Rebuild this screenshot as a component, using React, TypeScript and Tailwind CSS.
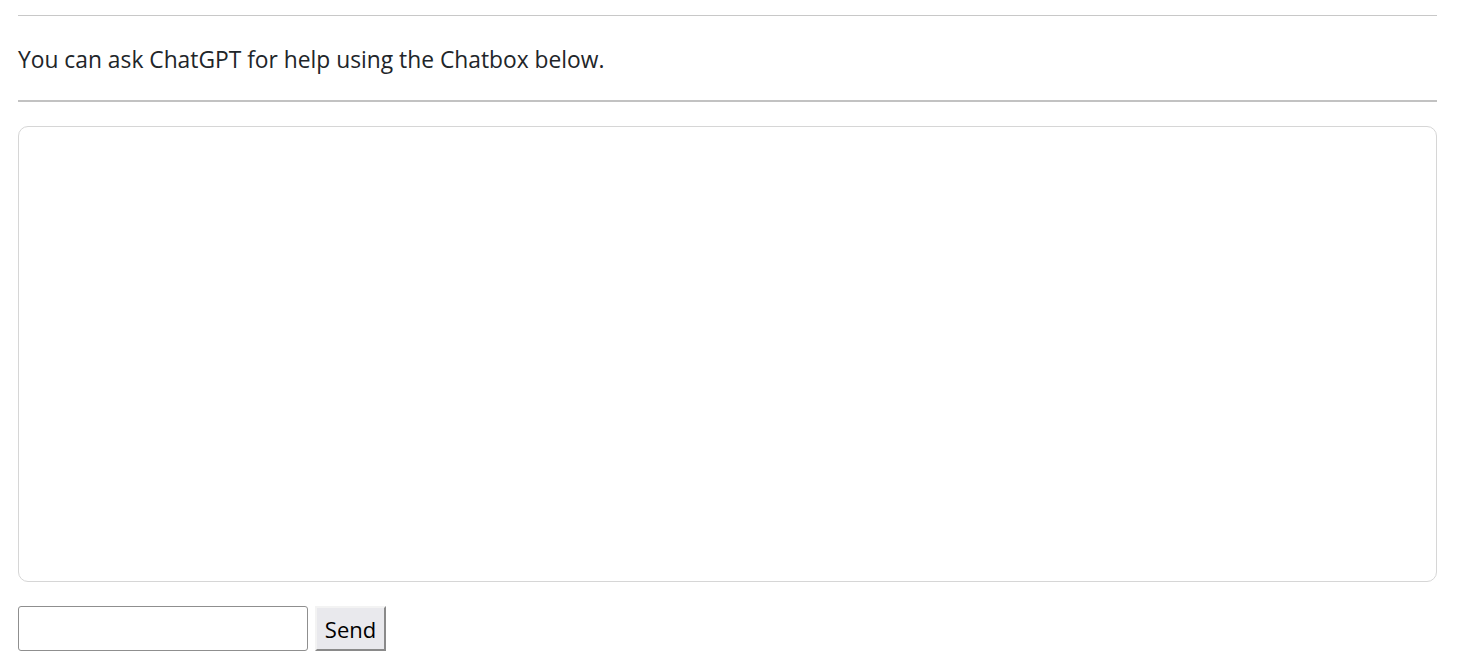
import { useState } from 'react';

export default function App() {
  const [message, setMessage] = useState('');

  return (
    <div className="bg-white min-h-screen pl-[18px] pr-[23px] text-[#212529]" style={{ fontFamily: '"Open Sans", "Noto Sans", sans-serif' }}>
      {/* Top divider */}
      <div className="pt-[15px]">
        <hr className="border-0 h-px bg-[#c8c8c8]" />
      </div>

      {/* Intro */}
      <p className="mt-[30px] text-[22.8px] leading-[28px]">
        You can ask ChatGPT for help using the Chatbox below.
      </p>

      <hr className="mt-[26px] border-0 h-[2px] bg-[#c2c2c2]" />

      {/* Chatbox */}
      <div className="mt-[24px] h-[456px] rounded-[10px] border border-[#d6d6d6] bg-white overflow-y-auto"></div>

      {/* Input row */}
      <div className="mt-[24px] flex items-stretch gap-[7px]">
        <input
          type="text"
          value={message}
          onChange={(e) => setMessage(e.target.value)}
          className="w-[290px] h-[45px] rounded-[3px] border border-[#8f8f8f] px-2 text-[20px] outline-none"
        />
        <button
          className="w-[71px] h-[45px] bg-[#e9e9ed] text-black text-[22px] leading-none border-2 border-t-[#f3f3f3] border-l-[#f3f3f3] border-r-[#8a8a8a] border-b-[#8a8a8a] pt-[1px]"
          style={{ fontFamily: '"Open Sans", "Noto Sans", sans-serif' }}
        >
          Send
        </button>
      </div>
    </div>
  );
}
